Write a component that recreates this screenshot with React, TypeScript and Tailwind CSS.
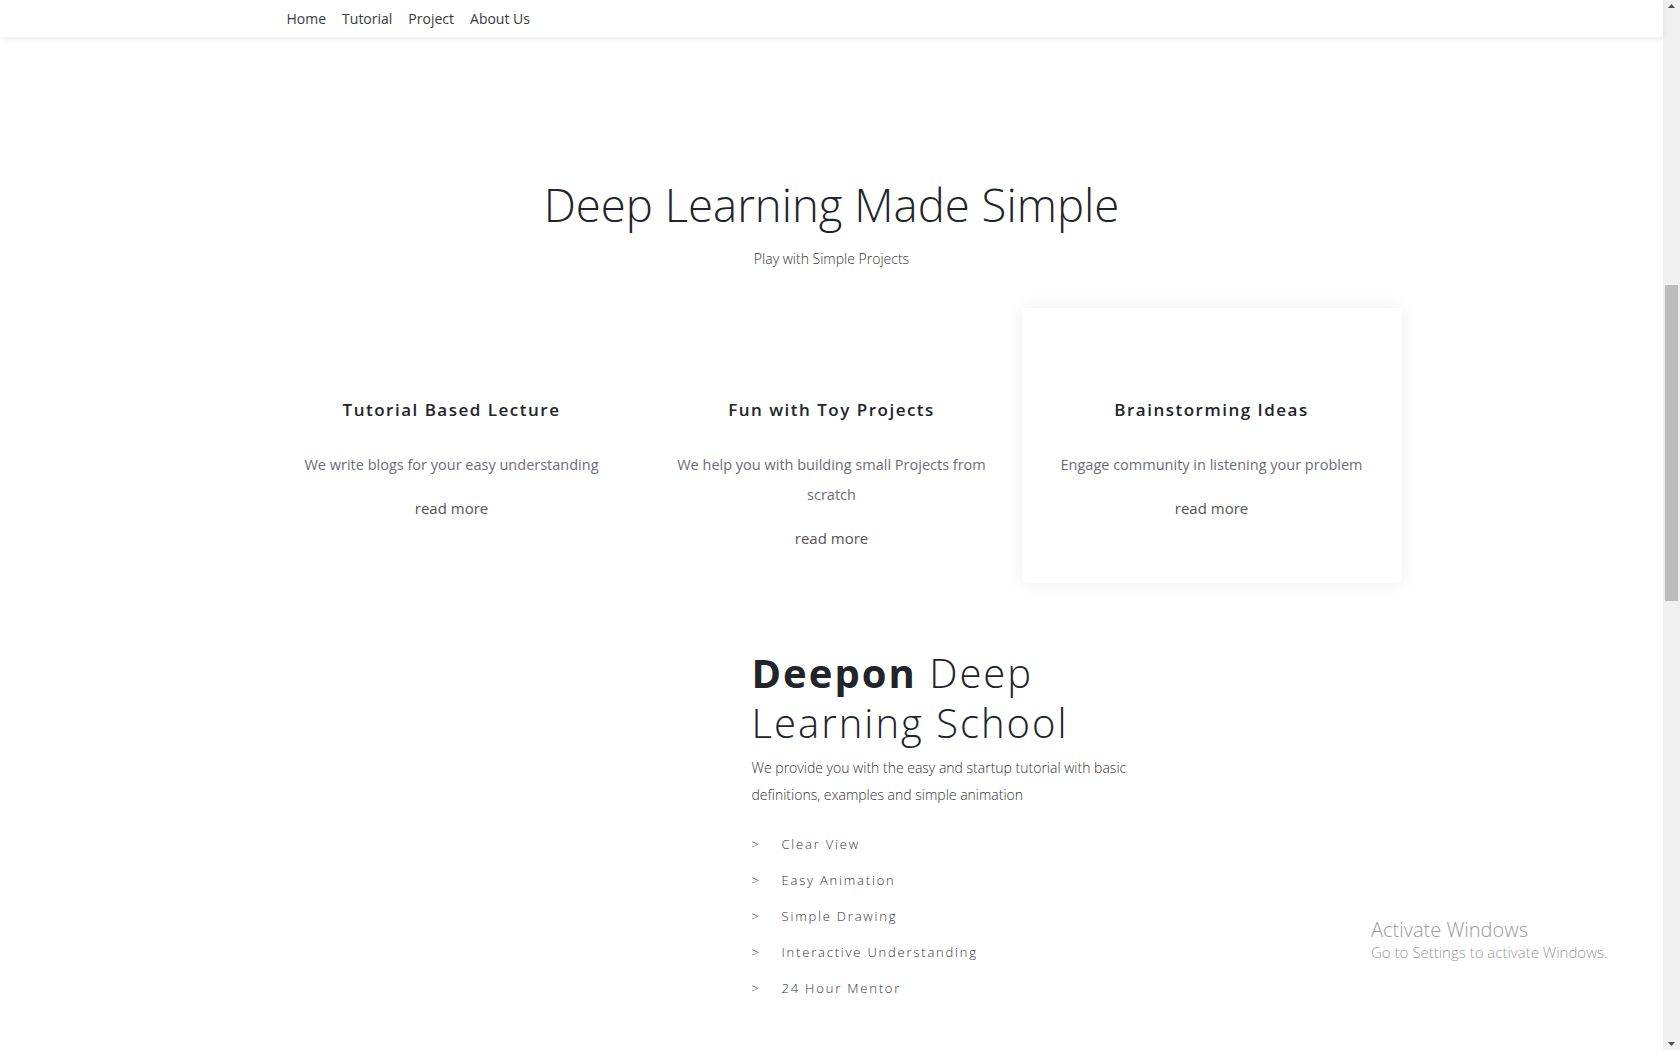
const cards = [
  { title: "Tutorial Based Lecture", text: "We write blogs for your easy understanding", shadow: false },
  { title: "Fun with Toy Projects", text: "We help you with building small Projects from scratch", shadow: false },
  { title: "Brainstorming Ideas", text: "Engage community in listening your problem", shadow: true },
]

const features = ["Clear View", "Easy Animation", "Simple Drawing", "Interactive Understanding", "24 Hour Mentor"]

function Navbar() {
  return (
    <nav className="h-[37px] bg-white shadow-[0_2px_6px_rgba(0,0,0,0.08)] relative z-10">
      <div className="w-[1140px] mx-auto pl-[17px] flex items-center h-full">
        {["Home", "Tutorial", "Project", "About Us"].map((item) => (
          <a key={item} className="px-[8px] text-[14px] text-[#3a3a3a] leading-none">{item}</a>
        ))}
      </div>
    </nav>
  )
}

function Scrollbar() {
  return (
    <div className="absolute right-0 top-0 w-[17px] h-[1050px] bg-[#f0f0f0] flex flex-col items-center">
      <svg width="9" height="17" viewBox="0 0 9 17" className="shrink-0">
        <path d="M1 8 L4.5 4 L8 8 Z" fill="#505050" />
      </svg>
      <div className="mt-[268px] w-[13px] h-[316px] bg-[#bcbcbc]" />
      <div className="flex-1" />
      <svg width="9" height="17" viewBox="0 0 9 17" className="shrink-0">
        <path d="M1 9 L4.5 13 L8 9 Z" fill="#505050" />
      </svg>
    </div>
  )
}

export default function App() {
  return (
    <div className="relative w-[1680px] h-[1050px] overflow-hidden bg-white font-['Open_Sans',sans-serif] text-[#212529]">
      <div className="w-[1663px]">
        <Navbar />

        <section className="text-center pt-[140px]">
          <h1 className="text-[45.5px] font-light leading-[1.2] text-[#212529]">Deep Learning Made Simple</h1>
          <p className="mt-[16px] text-[14px] font-light text-[#333]">Play with Simple Projects</p>
        </section>

        <section className="w-[1140px] mx-auto grid grid-cols-3 mt-[39px]">
          {cards.map((card) => (
            <div
              key={card.title}
              className={`h-[275px] text-center px-[24px] pt-[92px] bg-white ${card.shadow ? "shadow-[0_0_18px_rgba(0,0,0,0.07)]" : ""}`}
            >
              <h3 className="text-[17px] font-semibold tracking-[1.5px] leading-[1.2] text-[#212529]">{card.title}</h3>
              <p className="mt-[30px] text-[14.5px] leading-[30px] text-[#6c6c78]">{card.text}</p>
              <a className="block mt-[16px] text-[15px] leading-[24px] text-[#555]">read more</a>
            </div>
          ))}
        </section>

        <section className="w-[1140px] mx-auto mt-[65px]">
          <div className="ml-[490px] w-[420px]">
            <h2 className="text-[40px] leading-[50px] tracking-[2px] font-light text-[#212529]">
              <span className="font-bold">Deepon</span> Deep
              <br />
              Learning School
            </h2>
            <p className="mt-[6px] text-[14px] leading-[27px] font-light text-[#333]">
              We provide you with the easy and startup tutorial with basic
              <br />
              definitions, examples and simple animation
            </p>
            <ul className="mt-[26px] flex flex-col gap-[16px]">
              {features.map((f) => (
                <li key={f} className="flex text-[13px] leading-[20px] tracking-[1.8px] font-light text-[#333]">
                  <span className="w-[30px]">&gt;</span>
                  <span>{f}</span>
                </li>
              ))}
            </ul>
          </div>
        </section>
      </div>

      <div className="absolute left-[1371px] top-[918px] text-[#9a9a9a] font-light">
        <div className="text-[20px] leading-[24px]">Activate Windows</div>
        <div className="text-[15px] leading-[20px]">Go to Settings to activate Windows.</div>
      </div>

      <Scrollbar />
    </div>
  )
}
